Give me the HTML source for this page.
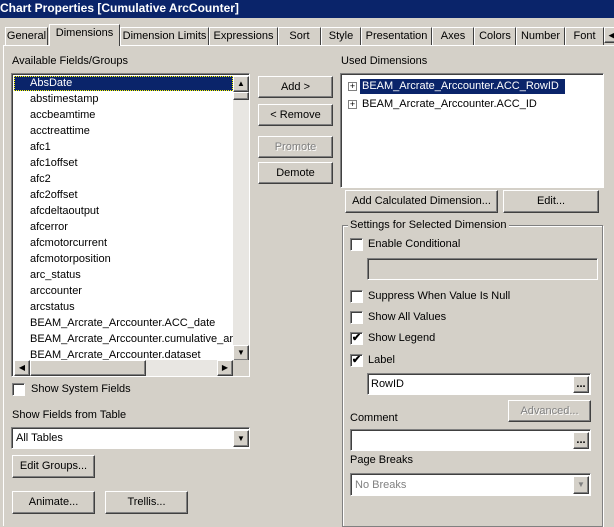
<!DOCTYPE html>
<html><head><style>
body{margin:0;width:614px;height:520px;background:#d4d0c8;font-family:"Liberation Sans",sans-serif;font-size:11px;color:#000;position:relative;overflow:hidden}
.a{position:absolute;white-space:nowrap}
.title{left:0;top:0;width:614px;height:18px;background:#0a246a;color:#fff;font-weight:bold;font-size:12px;line-height:17px}
.btn{position:absolute;background:#d4d0c8;border:1px solid;border-color:#fff #404040 #404040 #fff;box-shadow:inset -1px -1px #808080;box-sizing:border-box;text-align:center;line-height:20px;white-space:nowrap}
.sunk{position:absolute;background:#fff;border:1px solid;border-color:#808080 #fff #fff #808080;box-shadow:inset 1px 1px #404040;box-sizing:border-box}
.cb{position:absolute;width:13px;height:13px;background:#fff;border:1px solid;border-color:#808080 #fff #fff #808080;box-shadow:inset 1px 1px #404040;box-sizing:border-box;font-size:11px;line-height:11px;text-align:center;font-weight:bold}
.tab{position:absolute;top:27px;height:18px;border:1px solid;border-color:#fff #404040 transparent #fff;border-bottom:none;box-sizing:border-box;line-height:17px;text-align:center;font-size:11px;white-space:nowrap;overflow:hidden}
.item{position:absolute;left:18px;font-size:11px;white-space:nowrap}
.gray{color:#808080;text-shadow:1px 1px #fff}
</style></head><body>
<div class="a title">Chart Properties [Cumulative ArcCounter]</div>
<div class="tab" style="left:5px;width:43px">General</div>
<div class="tab" style="left:49px;width:71px;top:24px;height:22px;background:#d4d0c8;z-index:2">Dimensions</div>
<div class="tab" style="left:120px;width:89px">Dimension Limits</div>
<div class="tab" style="left:209px;width:69px">Expressions</div>
<div class="tab" style="left:278px;width:43px">Sort</div>
<div class="tab" style="left:321px;width:40px">Style</div>
<div class="tab" style="left:361px;width:71px">Presentation</div>
<div class="tab" style="left:432px;width:42px">Axes</div>
<div class="tab" style="left:474px;width:42px">Colors</div>
<div class="tab" style="left:516px;width:49px">Number</div>
<div class="tab" style="left:565px;width:39px">Font</div>
<div class="btn" style="left:604px;top:27px;width:16px;height:16px;line-height:14px;font-size:9px">◀</div>
<div class="a" style="left:3px;top:45px;width:620px;height:480px;border-left:1px solid #fff;border-top:1px solid #fff"></div>

<div class="a" style="left:12px;top:55px">Available Fields/Groups</div>
<div class="sunk" style="left:11px;top:73px;width:239px;height:304px;overflow:hidden">
<div class="a" style="left:2px;top:2px;width:219px;height:15px;background:#0a246a;outline:1px dotted #ff0;outline-offset:-1px"></div>
<div class="item" style="top:3px;color:#fff">AbsDate</div>
<div class="item" style="top:19px">abstimestamp</div>
<div class="item" style="top:35px">accbeamtime</div>
<div class="item" style="top:51px">acctreattime</div>
<div class="item" style="top:67px">afc1</div>
<div class="item" style="top:83px">afc1offset</div>
<div class="item" style="top:99px">afc2</div>
<div class="item" style="top:115px">afc2offset</div>
<div class="item" style="top:131px">afcdeltaoutput</div>
<div class="item" style="top:147px">afcerror</div>
<div class="item" style="top:163px">afcmotorcurrent</div>
<div class="item" style="top:179px">afcmotorposition</div>
<div class="item" style="top:195px">arc_status</div>
<div class="item" style="top:211px">arccounter</div>
<div class="item" style="top:227px">arcstatus</div>
<div class="item" style="top:243px">BEAM_Arcrate_Arccounter.ACC_date</div>
<div class="item" style="top:259px">BEAM_Arcrate_Arccounter.cumulative_arc</div>
<div class="item" style="top:275px">BEAM_Arcrate_Arccounter.dataset</div>
<div class="a" style="left:221px;top:2px;width:16px;height:284px;background:#e8e6e2"></div>
<div class="btn" style="left:221px;top:2px;width:16px;height:16px;line-height:14px;font-size:8px">▲</div>
<div class="btn" style="left:221px;top:18px;width:16px;height:8px"></div>
<div class="btn" style="left:221px;top:271px;width:16px;height:16px;line-height:14px;font-size:8px">▼</div>
<div class="a" style="left:2px;top:286px;width:219px;height:16px;background:#e8e6e2"></div>
<div class="btn" style="left:2px;top:286px;width:16px;height:16px;line-height:14px;font-size:8px">◀</div>
<div class="btn" style="left:18px;top:286px;width:116px;height:16px"></div>
<div class="btn" style="left:205px;top:286px;width:16px;height:16px;line-height:14px;font-size:8px">▶</div>
<div class="a" style="left:221px;top:286px;width:16px;height:16px;background:#d4d0c8"></div>
</div>

<div class="btn" style="left:258px;top:76px;width:75px;height:22px">Add &gt;</div>
<div class="btn" style="left:258px;top:104px;width:75px;height:22px">&lt; Remove</div>
<div class="btn gray" style="left:258px;top:136px;width:75px;height:22px">Promote</div>
<div class="btn" style="left:258px;top:162px;width:75px;height:22px">Demote</div>

<div class="cb" style="left:12px;top:383px"></div>
<div class="a" style="left:31px;top:383px">Show System Fields</div>
<div class="a" style="left:12px;top:409px">Show Fields from Table</div>
<div class="sunk" style="left:11px;top:427px;width:239px;height:22px"><div class="a" style="left:4px;top:4px">All Tables</div>
<div class="btn" style="left:221px;top:2px;width:16px;height:17px;line-height:15px;font-size:8px">▼</div></div>
<div class="btn" style="left:12px;top:455px;width:83px;height:23px">Edit Groups...</div>
<div class="btn" style="left:12px;top:491px;width:83px;height:23px">Animate...</div>
<div class="btn" style="left:105px;top:491px;width:83px;height:23px">Trellis...</div>

<div class="a" style="left:341px;top:55px">Used Dimensions</div>
<div class="sunk" style="left:340px;top:73px;width:264px;height:115px">
<div class="a" style="left:7px;top:8px;width:7px;height:7px;border:1px solid #808080;font-size:9px;line-height:7px;text-align:center">+</div>
<div class="a" style="left:19px;top:5px;width:205px;height:15px;background:#0a246a"></div>
<div class="a" style="left:21px;top:6px;color:#fff">BEAM_Arcrate_Arccounter.ACC_RowID</div>
<div class="a" style="left:7px;top:26px;width:7px;height:7px;border:1px solid #808080;font-size:9px;line-height:7px;text-align:center">+</div>
<div class="a" style="left:21px;top:24px">BEAM_Arcrate_Arccounter.ACC_ID</div>
</div>
<div class="btn" style="left:345px;top:190px;width:153px;height:23px">Add Calculated Dimension...</div>
<div class="btn" style="left:503px;top:190px;width:96px;height:23px">Edit...</div>

<div class="a" style="left:342px;top:225px;width:259px;height:300px;border:1px solid #808080;box-shadow:1px 1px #fff, inset 1px 1px #fff"></div>
<div class="a" style="left:348px;top:219px;background:#d4d0c8;padding:0 2px">Settings for Selected Dimension</div>
<div class="cb" style="left:350px;top:238px"></div><div class="a" style="left:368px;top:238px">Enable Conditional</div>
<div class="sunk" style="left:367px;top:258px;width:231px;height:22px;background:#d4d0c8"></div>
<div class="cb" style="left:350px;top:290px"></div><div class="a" style="left:368px;top:290px">Suppress When Value Is Null</div>
<div class="cb" style="left:350px;top:311px"></div><div class="a" style="left:368px;top:311px">Show All Values</div>
<div class="cb" style="left:350px;top:332px">✔</div><div class="a" style="left:368px;top:332px">Show Legend</div>
<div class="cb" style="left:350px;top:354px">✔</div><div class="a" style="left:368px;top:354px">Label</div>
<div class="sunk" style="left:367px;top:373px;width:224px;height:22px"><div class="a" style="left:3px;top:4px">RowID</div>
<div class="btn" style="left:205px;top:2px;width:16px;height:17px;line-height:15px;font-weight:bold">...</div></div>
<div class="btn gray" style="left:508px;top:400px;width:83px;height:22px">Advanced...</div>
<div class="a" style="left:350px;top:412px">Comment</div>
<div class="sunk" style="left:350px;top:429px;width:241px;height:22px">
<div class="btn" style="left:222px;top:2px;width:16px;height:17px;line-height:15px;font-weight:bold">...</div></div>
<div class="a" style="left:350px;top:454px">Page Breaks</div>
<div class="sunk" style="left:350px;top:473px;width:241px;height:23px"><div class="a gray" style="left:4px;top:5px;text-shadow:none">No Breaks</div>
<div class="btn" style="left:222px;top:2px;width:16px;height:18px;line-height:16px;font-size:8px;color:#808080">▼</div></div>
</body></html>
